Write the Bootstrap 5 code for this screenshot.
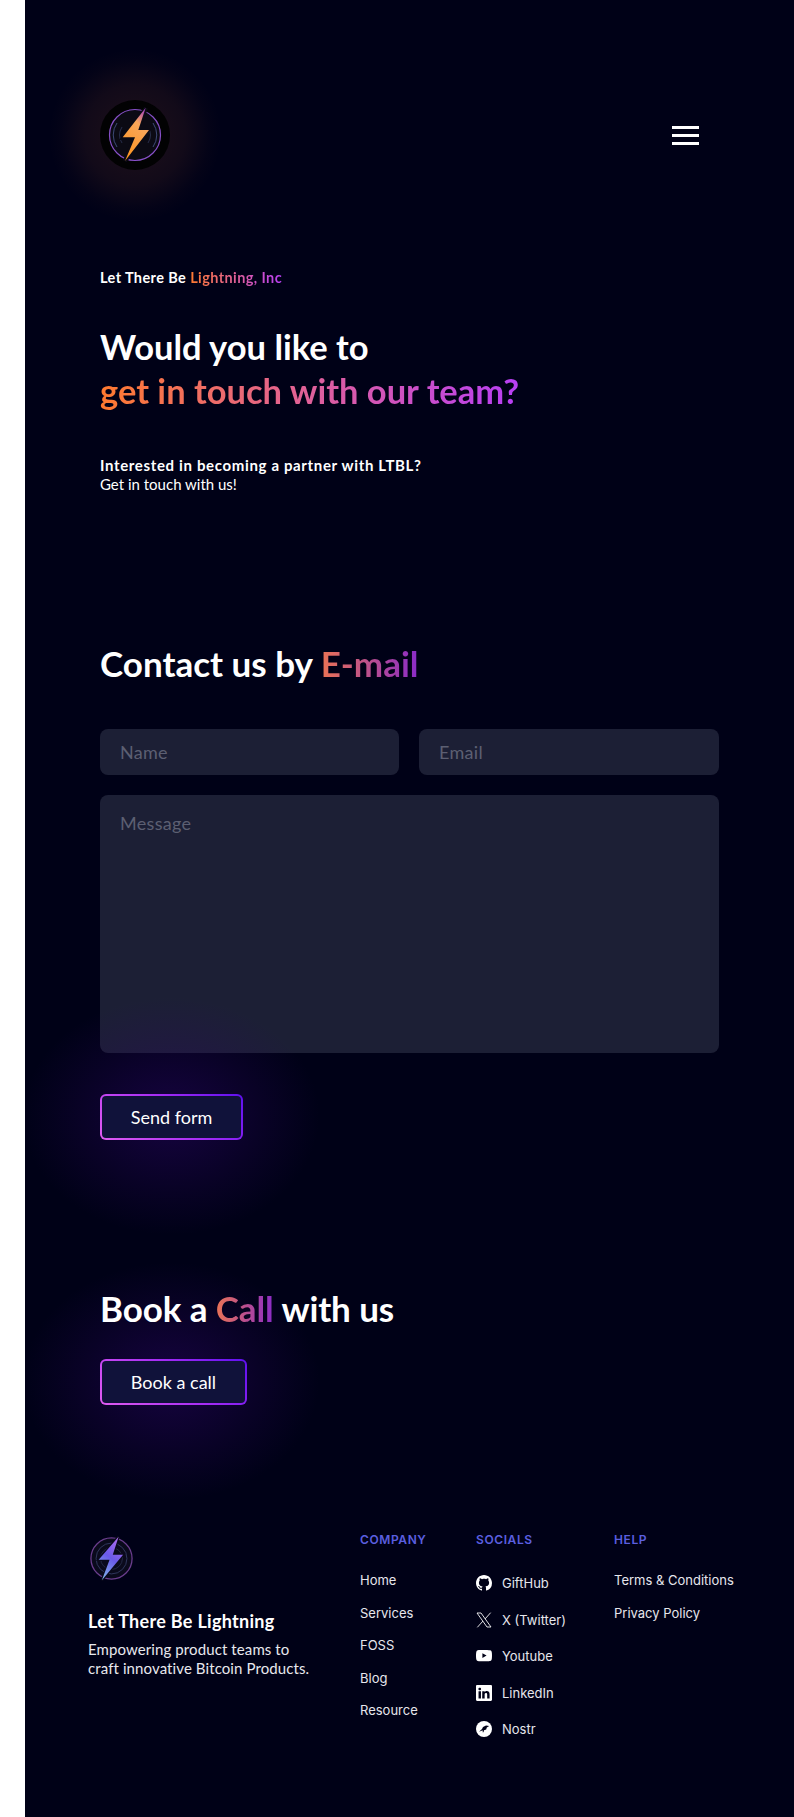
<!DOCTYPE html>
<html lang="en">
<head>
<meta charset="UTF-8">
<title>Contact - Let There Be Lightning</title>
<link href="https://cdn.jsdelivr.net/npm/bootstrap@5.3.2/dist/css/bootstrap.min.css" rel="stylesheet">
<style>
body { background: #fff; font-family: "Lato", "Liberation Sans", sans-serif; color: #fff; }
.page-wrap { margin-left: 25px; height: 1817px; background: #000117; overflow: hidden; position: relative; }
.top-bar { height: 135px; padding: 100px 95px 0 75px; }
.brand-logo { position: relative; width: 70px; height: 70px; flex: none; }
.brand-logo::before { content: ""; position: absolute; left: -50px; top: -50px; width: 170px; height: 170px; background: radial-gradient(circle, rgba(255,130,50,.12) 0, rgba(255,130,50,.07) 42%, rgba(255,130,50,.015) 62%, transparent 72%); }
.brand-logo svg { position: relative; display: block; }
.menu-btn { width: 27px; padding: 0; background: none; border: 0; margin-top: 26px; }
.menu-btn span { display: block; height: 3px; background: #fff; margin-bottom: 5px; }
.hero { padding: 0 75px; }
.eyebrow { margin: 134px 0 0; font-size: 14.5px; font-weight: 700; line-height: 18px; letter-spacing: .4px; }
.grad-main { background: linear-gradient(90deg, #ff7a2f 0%, #e0609a 50%, #b83ff5 100%); -webkit-background-clip: text; background-clip: text; color: transparent; }
.grad-dark { background: linear-gradient(90deg, #ea7355 0%, #8a2bc8 100%); -webkit-background-clip: text; background-clip: text; color: transparent; }
.hero-title { margin: 38px 0 0; font-size: 34.5px; font-weight: 700; line-height: 44px; }
.hero-sub { margin: 43px 0 0; font-size: 15px; line-height: 19px; }
.hero-sub strong { letter-spacing: .65px; }
.section-title { position: relative; z-index: 1; font-size: 35px; font-weight: 700; line-height: 44px; margin: 0; }
.contact-box { padding: 0 75px; margin-top: 147px; }
.contact-form { margin-top: 44px; }
.field-row { gap: 20px; }
.field-input { height: 46px; background: #1c1f35; border: 0; border-radius: 8px; color: #fff; font-family: "Lato", sans-serif; font-size: 18px; letter-spacing: .3px; padding: 0 20px; }
.field-input::placeholder { color: #5c5f72; }
.field-input:focus { background: #1c1f35; color: #fff; }
.name-input { width: 299px; }
.mail-input { width: 300px; }
textarea.field-input { height: 258px; padding-top: 15px; resize: none; margin-top: 20px; }
.glow-wrap { position: relative; }
.glow-wrap::before { content: ""; position: absolute; left: -79px; top: -98px; width: 300px; height: 240px; background: radial-gradient(ellipse, rgba(52,6,120,.42) 0, rgba(45,6,100,.2) 42%, transparent 70%); pointer-events: none; }
.grad-btn { position: relative; display: block; height: 46px; font-size: 18px; color: #fff; border: 2px solid transparent; border-radius: 6px; background: linear-gradient(#10123a, #10123a) padding-box, linear-gradient(45deg, #e05cf0, #a52cf5 55%, #5e10f0) border-box; padding: 0; }
.grad-btn:hover { color: #fff; }
.btn-send { width: 143px; }
.btn-call { width: 147px; }
.send-row { margin-top: 41px; }
.call-row { margin-top: 29px; }
.call-box { padding: 0 75px; margin-top: 146px; }
.call-box .section-title { letter-spacing: -.1px; }
.site-footer { position: relative; padding: 0 0 0 63px; }
.foot-brand { width: 272px; padding-top: 131px; }
.foot-brand svg { margin-left: 1px; }
.foot-name { font-size: 18px; font-weight: 700; line-height: 22px; margin: 29px 0 0; letter-spacing: .3px; }
.foot-text { font-size: 15px; line-height: 19px; margin: 8px 0 0; letter-spacing: .1px; color: #e8e8ee; }
.foot-col { padding-top: 127px; }
.company-col { width: 116px; }
.socials-col { width: 138px; }
.foot-head { font-family: "Inter", sans-serif; font-size: 12px; font-weight: 600; letter-spacing: .6px; color: #5b5fe0; line-height: 16px; margin: 0 0 22px; }
.foot-link { display: block; font-family: "Inter", sans-serif; font-size: 13px; line-height: 20px; color: #e6e6ec; text-decoration: none; margin-bottom: 12.5px; }
.social-list { padding-top: 3px; }
.social-link { display: flex; align-items: center; gap: 10px; font-family: "Inter", sans-serif; font-size: 13px; line-height: 20px; color: #e6e6ec; text-decoration: none; height: 20px; margin-bottom: 16.5px; }
.social-link svg { width: 16px; height: 16px; flex: none; }
</style>
</head>
<body>
<div class="page-wrap">
  <header class="top-bar d-flex justify-content-between align-items-start">
    <div class="brand-logo">
      <svg width="70" height="70" viewBox="0 0 70 70">
        <defs>
          <linearGradient id="boltA" x1="0.75" y1="0" x2="0.3" y2="1">
            <stop offset="0" stop-color="#a23fc0"/><stop offset=".3" stop-color="#f9a65a"/><stop offset="1" stop-color="#ff9520"/>
          </linearGradient>
          <linearGradient id="boltB" x1="0.75" y1="0" x2="0.3" y2="1">
            <stop offset="0" stop-color="#b06cf0"/><stop offset=".5" stop-color="#6a5ae8"/><stop offset="1" stop-color="#7fb0e8"/>
          </linearGradient>
        </defs>
        <circle cx="35" cy="35" r="35" fill="#020203"/>
        <circle cx="35" cy="35" r="25.5" fill="#0b0a14" stroke="#8750c8" stroke-width="1.2"/>
        <path d="M17 23A21 21 0 0 0 17 47M53 23A21 21 0 0 1 53 47" fill="none" stroke="#4a5a90" stroke-width=".8"/>
        <path d="M22 27A15 15 0 0 0 22 43M48 27A15 15 0 0 1 48 43" fill="none" stroke="#2f3658" stroke-width=".8"/>
        <path d="M46 8 23 38H34L25 61 49 29H38Z" fill="#0b0a14" stroke="#0b0a14" stroke-width="4"/>
        <path d="M45.7 7.7 22.7 37.3H35L25 61 49 30H38.3Z" fill="url(#boltA)"/>
      </svg>
    </div>
    <button class="menu-btn" type="button" aria-label="Menu"><span></span><span></span><span></span></button>
  </header>

  <section class="hero">
    <p class="eyebrow">Let There Be <span class="grad-main">Lightning, Inc</span></p>
    <h1 class="hero-title">Would you like to<br><span class="grad-main">get in touch with our team?</span></h1>
    <p class="hero-sub"><strong>Interested in becoming a partner with LTBL?</strong><br>Get in touch with us!</p>
  </section>

  <section class="contact-box">
    <h2 class="section-title">Contact us by <span class="grad-dark">E-mail</span></h2>
    <form class="contact-form">
      <div class="d-flex field-row">
        <input class="form-control field-input name-input" type="text" placeholder="Name">
        <input class="form-control field-input mail-input" type="email" placeholder="Email">
      </div>
      <textarea class="form-control field-input" placeholder="Message"></textarea>
      <div class="glow-wrap send-row"><button class="btn grad-btn btn-send" type="button">Send form</button></div>
    </form>
  </section>

  <section class="call-box">
    <h2 class="section-title">Book a <span class="grad-dark">Call</span> with us</h2>
    <div class="glow-wrap call-row"><button class="btn grad-btn btn-call" type="button">Book a call</button></div>
  </section>

  <footer class="site-footer d-flex">
    <div class="foot-brand">
      <svg width="45" height="45" viewBox="0 0 70 70" class="d-block">
        <circle cx="35" cy="35" r="32" fill="#0a0a1c" stroke="#6a3d8c" stroke-width="2"/>
        <circle cx="35" cy="35" r="24" fill="none" stroke="#3b4470" stroke-width="1.2"/>
        <circle cx="35" cy="35" r="17" fill="none" stroke="#2b3050" stroke-width="1.2"/>
        <path d="M46 1 15 37H32L20 69 53 29H37Z" fill="#0a0a1c" stroke="#0a0a1c" stroke-width="4"/>
        <path d="M46 1 15 37H32L20 69 53 29H37Z" fill="url(#boltB)"/>
      </svg>
      <p class="foot-name">Let There Be Lightning</p>
      <p class="foot-text">Empowering product teams to<br>craft innovative Bitcoin Products.</p>
    </div>
    <div class="foot-col company-col">
      <h3 class="foot-head">COMPANY</h3>
      <a class="foot-link" href="#">Home</a>
      <a class="foot-link" href="#">Services</a>
      <a class="foot-link" href="#">FOSS</a>
      <a class="foot-link" href="#">Blog</a>
      <a class="foot-link" href="#">Resource</a>
    </div>
    <div class="foot-col socials-col">
      <h3 class="foot-head">SOCIALS</h3>
      <div class="social-list">
      <a class="social-link" href="#"><svg viewBox="0 0 16 16" fill="#fff"><path d="M8 0C3.58 0 0 3.58 0 8c0 3.54 2.29 6.53 5.47 7.59.4.07.55-.17.55-.38 0-.19-.01-.82-.01-1.49-2.01.37-2.53-.49-2.69-.94-.09-.23-.48-.94-.82-1.13-.28-.15-.68-.52-.01-.53.63-.01 1.08.58 1.23.82.72 1.21 1.87.87 2.33.66.07-.52.28-.87.51-1.07-1.78-.2-3.64-.89-3.64-3.95 0-.87.31-1.59.82-2.15-.08-.2-.36-1.02.08-2.12 0 0 .67-.21 2.2.82.64-.18 1.32-.27 2-.27.68 0 1.36.09 2 .27 1.53-1.04 2.2-.82 2.2-.82.44 1.1.16 1.92.08 2.12.51.56.82 1.27.82 2.15 0 3.07-1.87 3.75-3.65 3.95.29.25.54.73.54 1.48 0 1.07-.01 1.93-.01 2.2 0 .21.15.46.55.38A8.012 8.012 0 0 0 16 8c0-4.42-3.58-8-8-8z"/></svg>GiftHub</a>
      <a class="social-link" href="#"><svg viewBox="0 0 24 24" fill="none" stroke="#fff" stroke-width="1.3"><path d="M1.5 1.5H7.5L22.5 22.5H16.5Z"/><path d="M22 1 13.6 10.4M10.4 13.6 2 23"/></svg>X (Twitter)</a>
      <a class="social-link" href="#"><svg viewBox="0 0 16 16" fill="#fff"><path d="M8.051 1.999h.089c.822.003 4.987.033 6.11.335a2.01 2.01 0 0 1 1.415 1.42c.101.38.172.883.22 1.402l.01.104.022.26.008.104c.065.914.073 1.77.074 1.957v.075c-.001.194-.01 1.108-.082 2.06l-.008.105-.009.104c-.05.572-.124 1.14-.235 1.558a2.007 2.007 0 0 1-1.415 1.42c-1.16.312-5.569.334-6.18.335h-.142c-.309 0-1.587-.006-2.927-.052l-.17-.006-.087-.004-.171-.007-.171-.007c-1.11-.049-2.167-.128-2.654-.26a2.007 2.007 0 0 1-1.415-1.419c-.111-.417-.185-.986-.235-1.558L.09 9.82l-.008-.104A31.4 31.4 0 0 1 0 7.68v-.123c.002-.215.01-.958.064-1.778l.007-.103.003-.052.008-.104.022-.26.01-.104c.048-.519.119-1.023.22-1.402a2.007 2.007 0 0 1 1.415-1.42c.487-.13 1.544-.21 2.654-.26l.17-.007.172-.006.086-.003.171-.007A99.788 99.788 0 0 1 7.858 2h.193zM6.4 5.209v4.818l4.157-2.408L6.4 5.209z"/></svg>Youtube</a>
      <a class="social-link" href="#"><svg viewBox="0 0 16 16" fill="#fff"><path d="M0 1.146C0 .513.526 0 1.175 0h13.65C15.474 0 16 .513 16 1.146v13.708c0 .633-.526 1.146-1.175 1.146H1.175C.526 16 0 15.487 0 14.854V1.146zm4.943 12.248V6.169H2.542v7.225h2.401zm-1.2-8.212c.837 0 1.358-.554 1.358-1.248-.015-.709-.52-1.248-1.342-1.248-.822 0-1.359.54-1.359 1.248 0 .694.521 1.248 1.327 1.248h.016zm4.908 8.212V9.359c0-.216.016-.432.08-.586.173-.431.568-.878 1.232-.878.869 0 1.216.662 1.216 1.634v3.865h2.401V9.25c0-2.22-1.184-3.252-2.764-3.252-1.274 0-1.845.7-2.165 1.193v.025h-.016a5.54 5.54 0 0 1 .016-.025V6.169h-2.4c.03.678 0 7.225 0 7.225h2.4z"/></svg>LinkedIn</a>
      <a class="social-link" href="#"><svg viewBox="0 0 16 16"><circle cx="8" cy="8" r="8" fill="#fff"/><path d="M3 10.8 6 8 7 6 10 4.6 13.2 5 10.8 6.5 10.2 8.5 8 9.3 7.5 11.2H6.6L6.9 9.4 5.5 9.7Z" fill="#000117"/></svg>Nostr</a>
      </div>
    </div>
    <div class="foot-col">
      <h3 class="foot-head">HELP</h3>
      <a class="foot-link" href="#">Terms &amp; Conditions</a>
      <a class="foot-link" href="#">Privacy Policy</a>
    </div>
  </footer>
</div>
<script src="https://cdn.jsdelivr.net/npm/bootstrap@5.3.2/dist/js/bootstrap.bundle.min.js"></script>
</body>
</html>
